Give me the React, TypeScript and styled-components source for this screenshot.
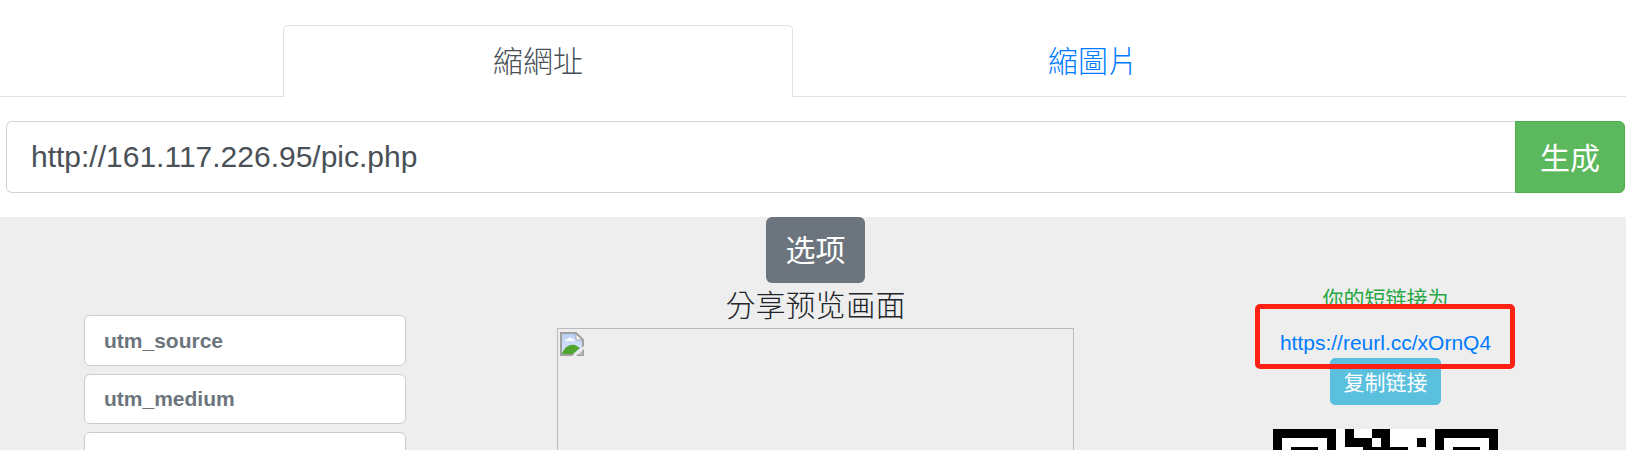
import React from "react";
import styled, { createGlobalStyle } from "styled-components";

const Global = createGlobalStyle`
  html, body { margin: 0; padding: 0; height: 450px; overflow: hidden; background: #fff; }
  body { font-family: "Liberation Sans", "Noto Sans CJK TC", "Noto Sans CJK SC", sans-serif; }
  * { box-sizing: border-box; }
`;

const CJK = `"Liberation Sans", "Noto Sans CJK SC", sans-serif`;

const TabBar = styled.div`
  display: flex;
  padding: 25px 0 0 283px;
  border-bottom: 1px solid #dee2e6;
  height: 97px;
`;
const Tab = styled.a<{ $active?: boolean; $w: number }>`
  width: ${(p) => p.$w}px;
  height: 72px;
  padding-bottom: 5px;
  display: flex;
  align-items: center;
  justify-content: center;
  font-size: 30px;
  font-weight: 300;
  color: ${(p) => (p.$active ? "#495057" : "#007bff")};
  background: ${(p) => (p.$active ? "#fff" : "transparent")};
  border: 1px solid ${(p) => (p.$active ? "#dee2e6" : "transparent")};
  border-bottom: 0;
  border-radius: 5px 5px 0 0;
`;
const UrlRow = styled.div`
  display: flex;
  margin: 24px 1px 24px 6px;
  height: 72px;
`;
const UrlInput = styled.div`
  flex: 1;
  border: 1px solid #ced4da;
  border-right: 0;
  border-radius: 6px 0 0 6px;
  padding-left: 24px;
  display: flex;
  align-items: center;
  font-size: 30px;
  color: #495057;
`;
const Generate = styled.button`
  width: 110px;
  border: 1px solid #4cae4c;
  background: #5cb85c;
  color: #fff;
  font-family: ${CJK};
  font-size: 30px;
  padding: 0 0 2px;
  border-radius: 0 6px 6px 0;
`;
const Panel = styled.div`
  background: #eee;
  height: 233px;
  overflow: hidden;
  display: grid;
  grid-template-columns: 489px 653px 484px;
`;
const Left = styled.div`
  padding: 98px 0 0 84px;
  display: flex;
  flex-direction: column;
  gap: 8px;
`;
const Param = styled.div`
  flex: none;
  width: 322px;
  height: 50.5px;
  padding: 1px 19px 0;
  display: flex;
  align-items: center;
  background: #fff;
  border: 1px solid #ccc;
  border-radius: 6px;
  font-size: 21px;
  font-weight: 700;
  color: #6c757d;
`;
const Center = styled.div`
  display: flex;
  flex-direction: column;
  align-items: center;
`;
const Options = styled.button`
  width: 99px;
  height: 66px;
  border: 0;
  padding: 0 0 4px;
  background: #6c757d;
  color: #fff;
  font-family: ${CJK};
  font-size: 30px;
  border-radius: 6px;
`;
const Heading = styled.div`
  font-size: 30px;
  font-weight: 300;
  line-height: 45px;
  color: #212529;
`;
const Preview = styled.div`
  width: 517px;
  height: 200px;
  flex: none;
  border: 1px solid #bbb;
  padding: 3px 2px;
`;
const Right = styled.div`
  position: relative;
  padding: 66px 0 0 3px;
  display: flex;
  flex-direction: column;
  align-items: center;
`;
const ShortLabel = styled.div`
  font-size: 21px;
  line-height: 31px;
  color: #28a745;
`;
const ShortLink = styled.a`
  margin-top: 13px;
  font-size: 21px;
  line-height: 31px;
  color: #007bff;
`;
const Copy = styled.button`
  margin-top: 0;
  width: 111px;
  height: 47px;
  flex: none;
  background: #5bc0de;
  border: 1px solid #5bc0de;
  border-radius: 5px;
  color: #fff;
  padding: 0 0 2px;
  font-family: ${CJK};
  font-size: 21px;
`;
const Highlight = styled.div`
  position: absolute;
  left: 113px;
  top: 87px;
  width: 260px;
  height: 65px;
  border: 5px solid #ff2014;
  border-radius: 5px;
`;
const Qr = styled.svg`
  margin-top: 24px;
  flex: none;
  display: block;
`;
const BrokenSvg = styled.svg`
  display: block;
`;

const BrokenImage = () => (
  <BrokenSvg width="24" height="24" viewBox="0 0 24 24">
    <defs>
      <linearGradient id="sky" x1="0" y1="0" x2="0" y2="1">
        <stop offset="0" stopColor="#b9cff5" />
        <stop offset="1" stopColor="#dfe8fa" />
      </linearGradient>
    </defs>
    <path d="M1 1H16L23 8V23H1Z" fill="url(#sky)" stroke="#a0a0a0" strokeWidth="2" />
    <path d="M16 2V8H22Z" fill="#fff" stroke="#a8a8a8" />
    <path d="M5 9c0-1.500 2-2 3-2 .5-1.500 3-2 4-.5 1 .5 3 1 3 2.500Z" fill="#fff" />
    <path d="M2 22C4 15 10 12 15 13L20 16 13 22Z" fill="#4fa52f" />
    <path d="M12 24 24 14V17L16 24Z" fill="#eee" />
    <path d="M18 23 23 18V23Z" fill="#b5b5b5" />
  </BrokenSvg>
);

const QrCode = () => {
  const m = 9;
  const finder = (x: number) => (
    <g key={x}>
      <rect x={x * m} y={0} width={7 * m} height={7 * m} fill="#000" />
      <rect x={(x + 1) * m} y={m} width={5 * m} height={5 * m} fill="#fff" />
      <rect x={(x + 2) * m} y={2 * m} width={3 * m} height={3 * m} fill="#000" />
    </g>
  );
  const cells = [
    [8, 0], [11, 0], [12, 0],
    [8, 1], [9, 1], [10, 1], [12, 1], [16, 1],
    [10, 2], [11, 2], [12, 2], [13, 2], [14, 2],
  ];
  return (
    <Qr width="225" height="225" viewBox="0 0 225 225" shapeRendering="crispEdges" aria-label="QR code">
      <rect width="225" height="225" fill="#fff" />
      {finder(0)}
      {finder(18)}
      {cells.map(([x, y]) => (
        <rect key={`${x}-${y}`} x={x * m} y={y * m} width={m} height={m} fill="#000" />
      ))}
    </Qr>
  );
};

export default function App() {
  return (
    <>
      <Global />
      <TabBar>
        <Tab $active $w={510}>縮網址</Tab>
        <Tab $w={600}>縮圖片</Tab>
      </TabBar>
      <UrlRow>
        <UrlInput>http://161.117.226.95/pic.php</UrlInput>
        <Generate>生成</Generate>
      </UrlRow>
      <Panel>
        <Left>
          <Param>utm_source</Param>
          <Param>utm_medium</Param>
          <Param>utm_campaign</Param>
        </Left>
        <Center>
          <Options>选项</Options>
          <Heading>分享预览画面</Heading>
          <Preview>
            <BrokenImage />
          </Preview>
        </Center>
        <Right>
          <ShortLabel>你的短链接为</ShortLabel>
          <ShortLink>https://reurl.cc/xOrnQ4</ShortLink>
          <Copy>复制链接</Copy>
          <QrCode />
          <Highlight />
        </Right>
      </Panel>
    </>
  );
}
